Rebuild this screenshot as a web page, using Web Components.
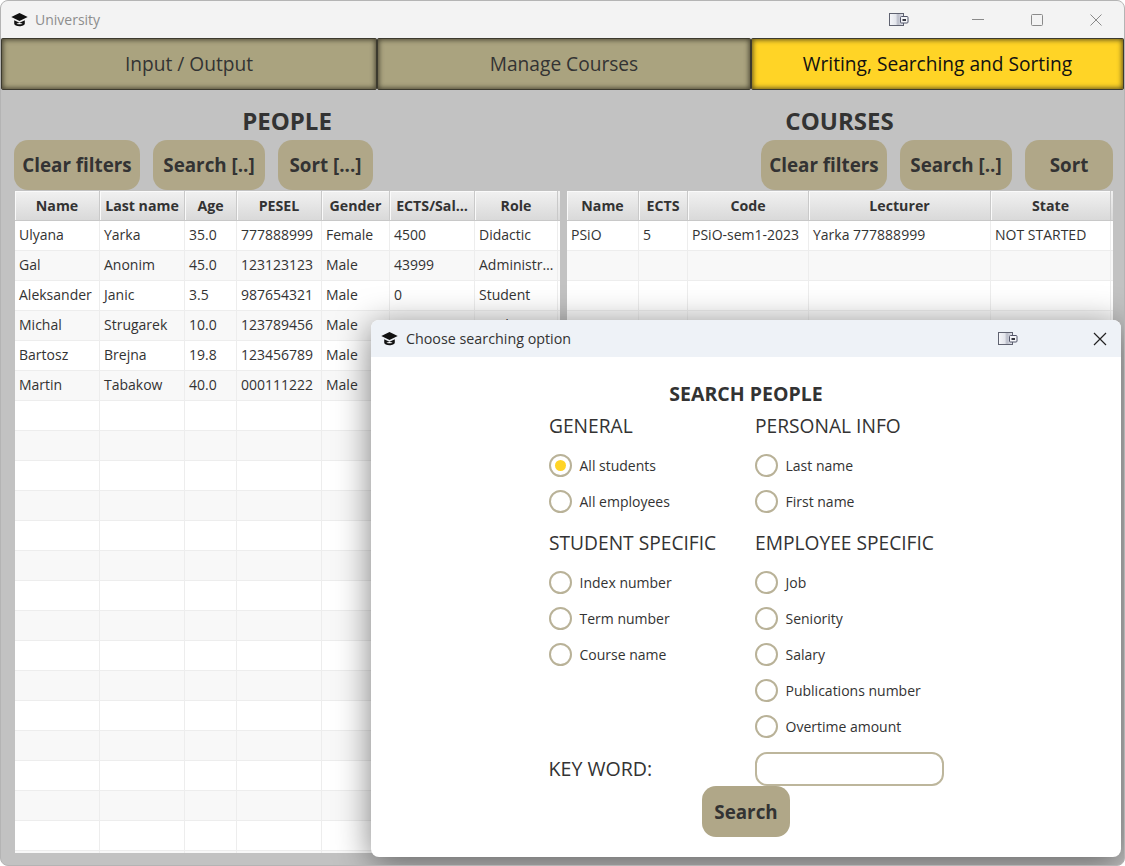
<!DOCTYPE html>
<html>
<head>
<meta charset="utf-8">
<title>University</title>
<style>
html, body { margin: 0; height: 100%; background: #fff; overflow: hidden; }
body { font-family: "Open Sans", "Liberation Sans", sans-serif; color: #333; }
</style>
</head>
<body>
<uni-window>
  <window-bar slot="bar" heading="University" controls></window-bar>
  <tab-strip slot="tabs">
    <tab-item style="--w:376px">Input / Output</tab-item>
    <tab-item style="--w:374px">Manage Courses</tab-item>
    <tab-item style="--w:373px" selected>Writing, Searching and Sorting</tab-item>
  </tab-strip>
  <list-panel heading="PEOPLE" id="people" columns="85,85,52,85,68,85,83">
    <pill-button style="--w:126px">Clear filters</pill-button>
    <pill-button style="--w:112px">Search [..]</pill-button>
    <pill-button style="--w:95px">Sort [...]</pill-button>
  </list-panel>
  <list-panel heading="COURSES" id="courses" columns="72,49,121,182,120" end>
    <pill-button style="--w:126px">Clear filters</pill-button>
    <pill-button style="--w:112px">Search [..]</pill-button>
    <pill-button style="--w:88px">Sort</pill-button>
  </list-panel>
  <search-dialog slot="overlay"></search-dialog>
</uni-window>

<script>
const CAP_ICON = `<svg width="17" height="15" viewBox="0 0 17 15"><path fill="#111" d="M8.500 1 .3 5l8.200 4 8.200-4z"/><path fill="#111" d="M3.200 8.200v3.300C3.200 13.200 5.800 14.200 8.500 14.200s5.300-1 5.300-2.700V8.200l-5.300 2.600z"/><path fill="#fff" d="M5.400 11.800c1.700-1 4.500-1 6.200 0-1.700.7-4.500.7-6.200 0z"/></svg>`;

const SNAP_ICON = `<svg width="20" height="13" viewBox="0 0 20 13"><defs><linearGradient id="g"><stop offset="0" stop-color="#f6f7fa"/><stop offset=".45" stop-color="#e4e6ec"/><stop offset=".6" stop-color="#b9bcc8"/><stop offset="1" stop-color="#e8eaf0"/></linearGradient></defs><rect x=".5" y=".5" width="14" height="12" fill="url(#g)" stroke="#5f6270"/><rect x="11.500" y="3.500" width="7.500" height="6.500" rx="1" fill="#f4f5f8" stroke="#53566a"/><rect x="13.500" y="6" width="3.500" height="2" fill="#33353f"/></svg>`;

class WindowBar extends HTMLElement {
  constructor() {
    super();
    const full = this.hasAttribute('controls');
    this.attachShadow({mode: 'open'}).innerHTML = `
      <style>
      :host { display: flex; align-items: center; height: 37px; background: var(--bar-bg, #f3f3f3); }
      .icon { display: flex; margin: 0 var(--bar-gap, 7px) 0 10px; }
      .title { flex: 1; font-size: var(--bar-size, 14px); color: var(--bar-fg, #8d8d8d); }
      .snap { display: flex; }
      .btn { display: flex; justify-content: center; }
      .win { margin-right: -1px; }
      .win .snap { margin-right: 39px; }
      .win .btn { width: 59px; }
      .dlg .snap { margin-right: 61px; }
      .dlg .btn { width: 42px; }
      .wrap { display: flex; align-items: center; }
      svg { display: block; }
      </style>
      <span class="icon">${CAP_ICON}</span>
      <span class="title">${this.getAttribute('heading')}</span>
      <div class="wrap ${full ? 'win' : 'dlg'}">
        <span class="snap">${SNAP_ICON}</span>
        ${full ? `
        <span class="btn"><svg width="12" height="2"><path d="M0 .5h12" stroke="#8a8a8a"/></svg></span>
        <span class="btn"><svg width="12" height="12"><rect x=".5" y=".5" width="11" height="11" rx="1" fill="none" stroke="#8a8a8a"/></svg></span>
        <span class="btn"><svg width="12" height="12"><path d="M.5.500l11 11M11.500.500l-11 11" stroke="#8a8a8a"/></svg></span>
        ` : `
        <span class="btn"><svg width="14" height="14"><path d="M1 1l12 12M13 1 1 13" stroke="#222" stroke-width="1.200"/></svg></span>
        `}
      </div>`;
  }
}
customElements.define('window-bar', WindowBar);

class TabItem extends HTMLElement {
  constructor() {
    super();
    this.attachShadow({mode: 'open'}).innerHTML = `
      <style>
      :host {
        flex: 0 0 var(--w); display: flex; align-items: center; justify-content: center; box-sizing: border-box;
        height: 52px; padding-bottom: 1px; border: 1px solid #3c3a2e; border-radius: 2px;
        background: #aaa37f; color: #333; font-size: 19.150px;
        box-shadow: inset 0 0 5px 1px rgba(40, 38, 25, .75);
      }
      :host([selected]) { background: #ffd426; color: #111; }
      </style>
      <slot></slot>`;
  }
}
customElements.define('tab-item', TabItem);

class TabStrip extends HTMLElement {
  constructor() {
    super();
    this.attachShadow({mode: 'open'}).innerHTML = `
      <style>
      :host { display: flex; background: #c2c2c2; }
      </style>
      <slot></slot>`;
  }
}
customElements.define('tab-strip', TabStrip);

class PillButton extends HTMLElement {
  constructor() {
    super();
    this.attachShadow({mode: 'open'}).innerHTML = `
      <style>
      :host {
        display: flex; align-items: center; justify-content: center; box-sizing: border-box;
        width: var(--w, auto); height: var(--h, 50px); border-radius: 14px;
        background: #b0a788; color: #333; font-size: 18.800px; font-weight: 700;
      }
      </style>
      <slot></slot>`;
  }
}
customElements.define('pill-button', PillButton);

class DataTable extends HTMLElement {
  set config({columns, head, rows, total}) {
    const tmpl = columns.map(c => c + 'px').join(' ');
    const line = (cells, cls) => `<div class="row ${cls}">${columns.map((c, i) =>
      `<div class="cell">${cells[i] || ''}</div>`).join('')}</div>`;
    let body = '';
    for (let i = 0; i < total; i++) {
      body += line(rows[i] || [], i % 2 ? 'even' : 'odd');
    }
    this.shadowRoot.innerHTML = `
      <style>
      :host { display: block; overflow: hidden; background: #fff; font-size: 14px; color: #333; }
      .row { display: grid; grid-template-columns: ${tmpl}; height: 30px; box-sizing: border-box; border-bottom: 1px solid #ededed; }
      .odd { background: #fff; }
      .even { background: #f8f8f8; }
      .cell { padding: 0 4px; line-height: 27px; white-space: nowrap; overflow: hidden; border-right: 1px solid #ededed; }
      .head { background: linear-gradient(#f1f1f1, #d9d9d9); border-bottom: 1px solid #c8c8c8; font-weight: 700; font-size: 14.200px; }
      .head .cell { text-align: center; border-right: 1px solid #c9c9c9; box-shadow: inset 1px 1px 0 #fafafa; line-height: 30px; padding: 0; }
      </style>
      ${line(head, 'head')}${body}`;
  }
  constructor() {
    super();
    this.attachShadow({mode: 'open'});
  }
}
customElements.define('data-table', DataTable);

class ListPanel extends HTMLElement {
  constructor() {
    super();
    this.attachShadow({mode: 'open'}).innerHTML = `
      <style>
      :host { display: grid; grid-template-rows: 50px 50px 1fr; min-height: 0; min-width: 0; }
      h2 { margin: 0; font-size: 24px; font-weight: 700; text-align: center; line-height: 62px; height: 50px; color: #333; }
      .actions { display: flex; gap: 13px; }
      :host([end]) .actions { justify-content: flex-end; }
      data-table { margin: 1px 0 0 1px; }
      </style>
      <h2>${this.getAttribute('heading')}</h2>
      <div class="actions"><slot></slot></div>
      <data-table></data-table>`;
  }
  setData(head, rows) {
    this.shadowRoot.querySelector('data-table').config = {
      columns: this.getAttribute('columns').split(',').map(Number), head, rows, total: 22,
    };
  }
}
customElements.define('list-panel', ListPanel);

class RadioOption extends HTMLElement {
  constructor() {
    super();
    this.attachShadow({mode: 'open'}).innerHTML = `
      <style>
      :host { display: flex; align-items: center; gap: 8px; height: 36px; font-size: 14px; color: #333; }
      .dot { box-sizing: border-box; width: 23px; height: 23px; border: 2px solid #b9b298; border-radius: 50%; display: flex; align-items: center; justify-content: center; background: #fff; }
      :host([checked]) .dot::after { content: ""; width: 11px; height: 11px; border-radius: 50%; background: #ffd426; }
      </style>
      <span class="dot"></span><slot></slot>`;
  }
}
customElements.define('radio-option', RadioOption);

class OptionGroup extends HTMLElement {
  constructor() {
    super();
    this.attachShadow({mode: 'open'}).innerHTML = `
      <style>
      :host { display: block; }
      h3 { margin: 0 0 10px; padding-left: .5px; height: 22px; line-height: 22px; font-size: 19.200px; font-weight: 400; color: #333; white-space: nowrap; }
      </style>
      <h3>${this.getAttribute('heading')}</h3>
      <slot></slot>`;
  }
}
customElements.define('option-group', OptionGroup);

class SearchDialog extends HTMLElement {
  constructor() {
    super();
    this.attachShadow({mode: 'open'}).innerHTML = `
      <style>
      :host {
        position: absolute; left: 370px; top: 319px; width: 750px; height: 537px;
        display: block; background: #fff; border-radius: 8px; overflow: hidden;
        box-shadow: 0 6px 34px rgba(0, 0, 0, .5);
      }
      window-bar { --bar-bg: #eef2f7; --bar-fg: #333; --bar-size: 14.300px; --bar-gap: 8px; }
      .body { display: flex; flex-direction: column; align-items: center; }
      h1 { margin: 0; height: 22px; line-height: 22px; padding-top: 26px; font-size: 19.500px; font-weight: 700; color: #333; }
      .grid { display: grid; grid-template-columns: 206px 189px; margin-top: 10px; row-gap: 13px; }
      .key { display: grid; grid-template-columns: 206px 189px; align-items: center; margin-top: 8px; }
      .key span { font-size: 19.600px; color: #333; line-height: 22px; }
      .field { box-sizing: border-box; height: 34px; border: 2px solid #bdb69c; border-radius: 12px; background: #fff; }
      pill-button { --w: 88px; --h: 51px; }
      </style>
      <window-bar heading="Choose searching option"></window-bar>
      <div class="body">
        <h1>SEARCH PEOPLE</h1>
        <div class="grid">
          <option-group heading="GENERAL">
            <radio-option checked>All students</radio-option>
            <radio-option>All employees</radio-option>
          </option-group>
          <option-group heading="PERSONAL INFO">
            <radio-option>Last name</radio-option>
            <radio-option>First name</radio-option>
          </option-group>
          <option-group heading="STUDENT SPECIFIC">
            <radio-option>Index number</radio-option>
            <radio-option>Term number</radio-option>
            <radio-option>Course name</radio-option>
          </option-group>
          <option-group heading="EMPLOYEE SPECIFIC">
            <radio-option>Job</radio-option>
            <radio-option>Seniority</radio-option>
            <radio-option>Salary</radio-option>
            <radio-option>Publications number</radio-option>
            <radio-option>Overtime amount</radio-option>
          </option-group>
        </div>
        <div class="key"><span>KEY WORD:</span><div class="field"></div></div>
        <pill-button>Search</pill-button>
      </div>`;
  }
}
customElements.define('search-dialog', SearchDialog);

class UniWindow extends HTMLElement {
  constructor() {
    super();
    this.attachShadow({mode: 'open'}).innerHTML = `
      <style>
      :host {
        display: flex; flex-direction: column; box-sizing: border-box; position: relative;
        width: 1125px; height: 866px; border: 1px solid #b4b4b4; border-radius: 8px;
        background: #c2c2c2; overflow: hidden;
      }
      .content { flex: 1; min-height: 0; display: grid; grid-template-columns: 546px 547px; column-gap: 6px; padding: 0 0 12px 13px; }
      </style>
      <slot name="bar"></slot>
      <slot name="tabs"></slot>
      <div class="content"><slot></slot></div>
      <slot name="overlay"></slot>`;
  }
}
customElements.define('uni-window', UniWindow);

document.getElementById('people').setData(
  ['Name', 'Last name', 'Age', 'PESEL', 'Gender', 'ECTS/Sal…', 'Role'],
  [
    ['Ulyana', 'Yarka', '35.0', '777888999', 'Female', '4500', 'Didactic'],
    ['Gal', 'Anonim', '45.0', '123123123', 'Male', '43999', 'Administr…'],
    ['Aleksander', 'Janic', '3.5', '987654321', 'Male', '0', 'Student'],
    ['Michal', 'Strugarek', '10.0', '123789456', 'Male', '0', 'Student'],
    ['Bartosz', 'Brejna', '19.8', '123456789', 'Male'],
    ['Martin', 'Tabakow', '40.0', '000111222', 'Male'],
  ]);
document.getElementById('courses').setData(
  ['Name', 'ECTS', 'Code', 'Lecturer', 'State'],
  [['PSiO', '5', 'PSiO-sem1-2023', 'Yarka 777888999', 'NOT STARTED']]);
</script>
</body>
</html>
